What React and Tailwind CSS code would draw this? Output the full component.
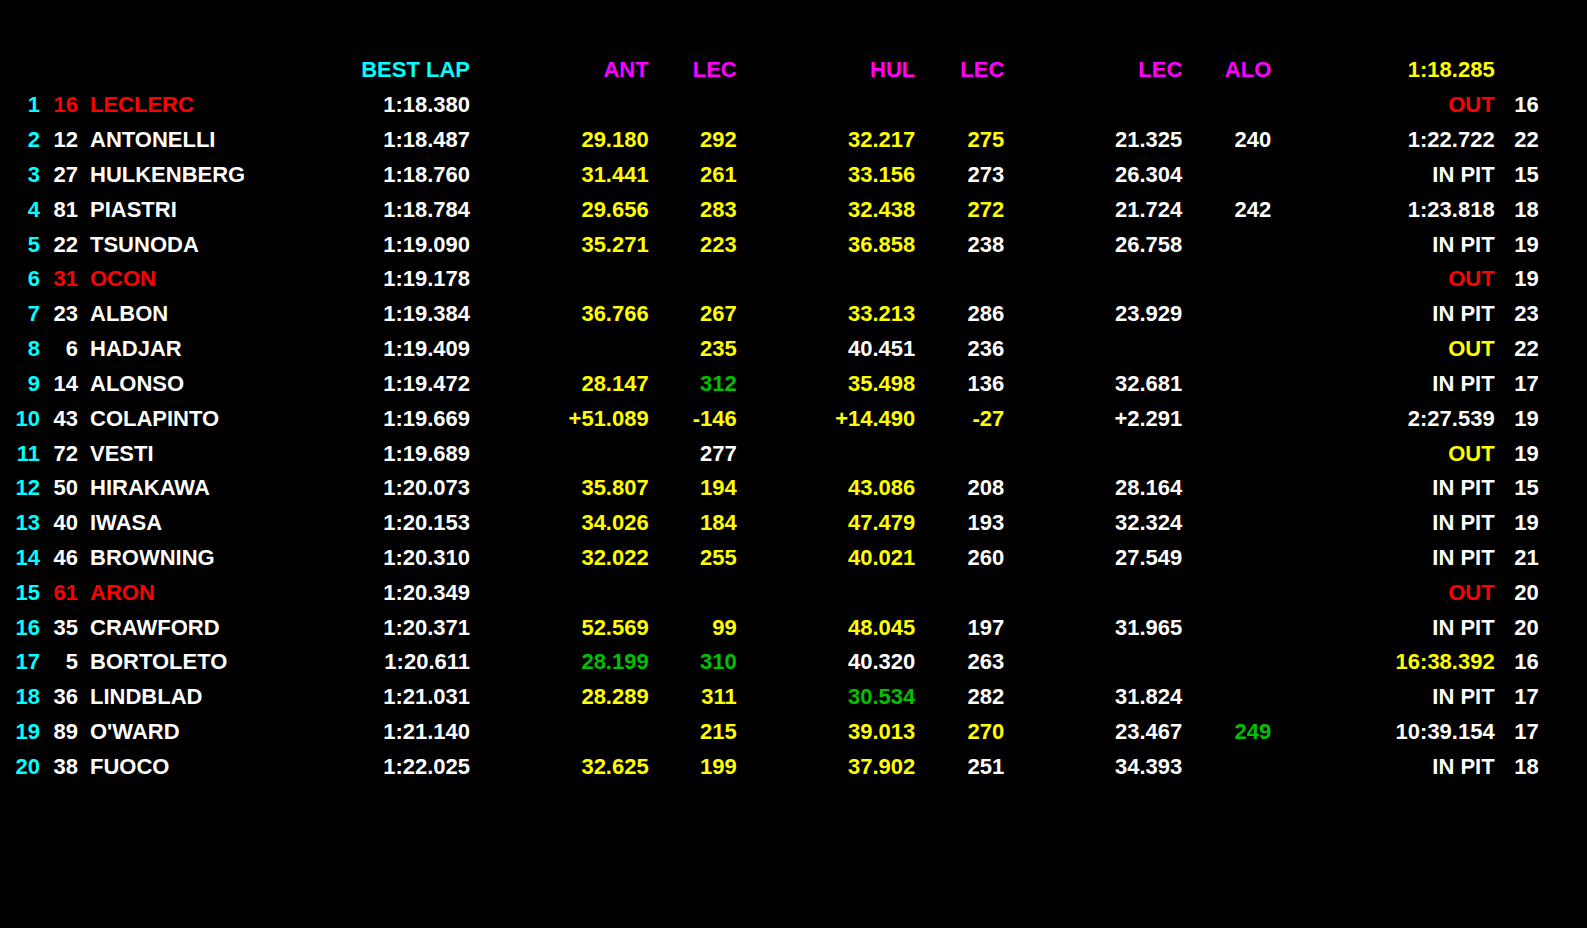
const COLORS = {
  w: 'text-white',
  y: 'text-[#ffff00]',
  r: 'text-[#ff0000]',
  g: 'text-[#00c000]',
  c: 'text-[#00ffff]',
  m: 'text-[#ff00ff]',
};

// cells: "color:text", empty string = blank cell
const header = ['', '', '', 'c:BEST LAP', 'm:ANT', 'm:LEC', 'm:HUL', 'm:LEC', 'm:LEC', 'm:ALO', 'y:1:18.285', ''];

const rows = [
  ['1', 'r:16', 'r:LECLERC', '1:18.380', '', '', '', '', '', '', 'r:OUT', '16'],
  ['2', '12', 'ANTONELLI', '1:18.487', 'y:29.180', 'y:292', 'y:32.217', 'y:275', '21.325', '240', '1:22.722', '22'],
  ['3', '27', 'HULKENBERG', '1:18.760', 'y:31.441', 'y:261', 'y:33.156', '273', '26.304', '', 'IN PIT', '15'],
  ['4', '81', 'PIASTRI', '1:18.784', 'y:29.656', 'y:283', 'y:32.438', 'y:272', '21.724', '242', '1:23.818', '18'],
  ['5', '22', 'TSUNODA', '1:19.090', 'y:35.271', 'y:223', 'y:36.858', '238', '26.758', '', 'IN PIT', '19'],
  ['6', 'r:31', 'r:OCON', '1:19.178', '', '', '', '', '', '', 'r:OUT', '19'],
  ['7', '23', 'ALBON', '1:19.384', 'y:36.766', 'y:267', 'y:33.213', '286', '23.929', '', 'IN PIT', '23'],
  ['8', '6', 'HADJAR', '1:19.409', '', 'y:235', '40.451', '236', '', '', 'y:OUT', '22'],
  ['9', '14', 'ALONSO', '1:19.472', 'y:28.147', 'g:312', 'y:35.498', '136', '32.681', '', 'IN PIT', '17'],
  ['10', '43', 'COLAPINTO', '1:19.669', 'y:+51.089', 'y:-146', 'y:+14.490', 'y:-27', '+2.291', '', '2:27.539', '19'],
  ['11', '72', 'VESTI', '1:19.689', '', '277', '', '', '', '', 'y:OUT', '19'],
  ['12', '50', 'HIRAKAWA', '1:20.073', 'y:35.807', 'y:194', 'y:43.086', '208', '28.164', '', 'IN PIT', '15'],
  ['13', '40', 'IWASA', '1:20.153', 'y:34.026', 'y:184', 'y:47.479', '193', '32.324', '', 'IN PIT', '19'],
  ['14', '46', 'BROWNING', '1:20.310', 'y:32.022', 'y:255', 'y:40.021', '260', '27.549', '', 'IN PIT', '21'],
  ['15', 'r:61', 'r:ARON', '1:20.349', '', '', '', '', '', '', 'r:OUT', '20'],
  ['16', '35', 'CRAWFORD', '1:20.371', 'y:52.569', 'y:99', 'y:48.045', '197', '31.965', '', 'IN PIT', '20'],
  ['17', '5', 'BORTOLETO', '1:20.611', 'g:28.199', 'g:310', '40.320', '263', '', '', 'y:16:38.392', '16'],
  ['18', '36', 'LINDBLAD', '1:21.031', 'y:28.289', 'y:311', 'g:30.534', '282', '31.824', '', 'IN PIT', '17'],
  ['19', '89', "O'WARD", '1:21.140', '', 'y:215', 'y:39.013', 'y:270', '23.467', 'g:249', '10:39.154', '17'],
  ['20', '38', 'FUOCO', '1:22.025', 'y:32.625', 'y:199', 'y:37.902', '251', '34.393', '', 'IN PIT', '18'],
];

function parse(cell, fallback) {
  if (!cell) return { color: fallback, text: '' };
  const m = cell.match(/^([wyrgcm]):(.*)$/);
  if (m) return { color: m[1], text: m[2] };
  return { color: fallback, text: cell };
}

function Row({ cells, isHeader }) {
  return (
    <div className="grid h-[34.84px] grid-cols-[40px_38px_223px_169px_178.7px_88px_178.6px_89px_178px_89px_223.4px_44px] items-center whitespace-nowrap">
      {cells.map((cell, i) => {
        const { color, text } = parse(cell, i === 0 && !isHeader ? 'c' : 'w');
        const align = i === 2 ? 'text-left pl-[12px]' : 'text-right';
        return (
          <div key={i} className={`${align} ${COLORS[color]}`}>
            {text}
          </div>
        );
      })}
    </div>
  );
}

export default function App() {
  return (
    <div className="min-h-screen w-full bg-black pt-[53px] text-[22px] font-bold leading-none font-['Liberation_Sans',Arial,sans-serif]">
      <Row cells={header} isHeader />
      {rows.map((r, i) => (
        <Row key={i} cells={r} />
      ))}
    </div>
  );
}
